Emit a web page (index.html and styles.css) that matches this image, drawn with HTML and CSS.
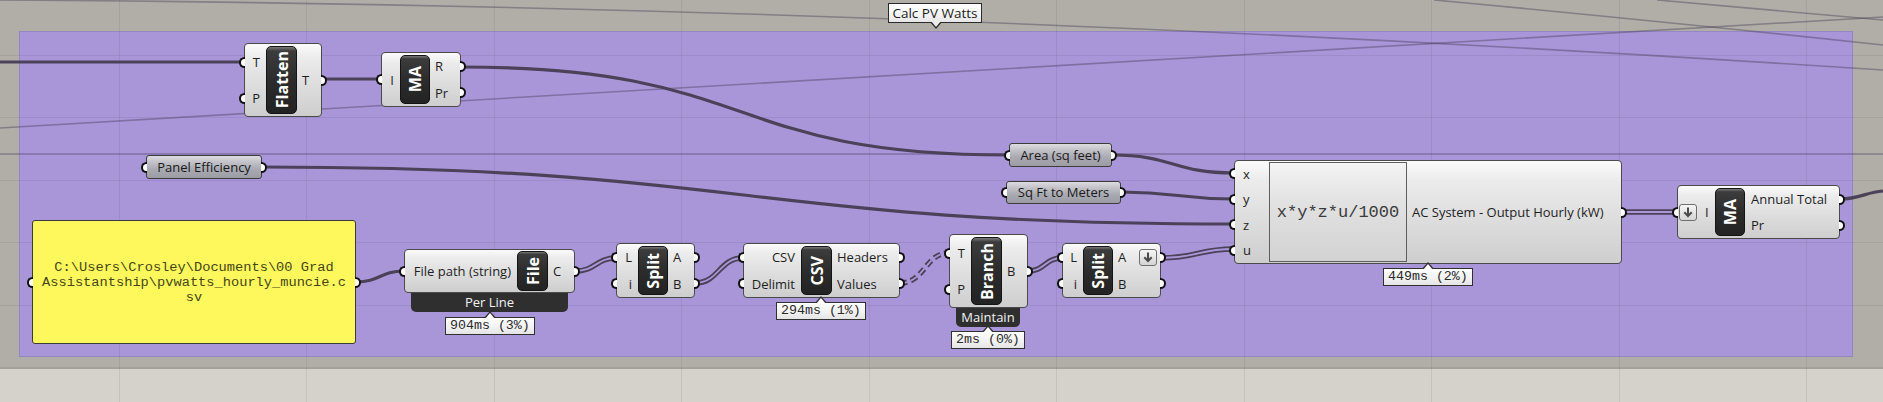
FILE: index.html
```html
<!DOCTYPE html>
<html>
<head>
<meta charset="utf-8">
<title>Calc PV Watts</title>
<link rel="stylesheet" href="styles.css">
</head>
<body>
<div class="canvas">
  <div class="group"></div>

  <svg class="wires" width="1883" height="402" viewBox="0 0 1883 402">
    <g class="grid">
      <path d="M119.5,0V402M306.5,0V402M494.5,0V402M681.5,0V402M869.5,0V402M1056.5,0V402M1244.5,0V402M1431.5,0V402M1619.5,0V402M1806.5,0V402"/>
      <path d="M0,55.5H1883M0,117.5H1883M0,180.5H1883M0,242.5H1883M0,305.5H1883"/>
    </g>
    <g class="thin">
      <path d="M0,128 L1883,17"/>
      <path d="M0,154 L1883,154"/>
      <path d="M0,0 Q900,5 1883,70"/>
      <path d="M1434,0 Q1650,20 1883,45"/>
      <path d="M1657,0 L1883,20"/>
    </g>
    <g class="wire">
      <path d="M0,62 L244,62"/>
      <path d="M322,79 L381,79"/>
      <path d="M461,67 C760,67 720,155 1009,155"/>
      <path d="M262,167 C748,167 748,224 1234,224"/>
      <path d="M1112,155 C1173,155 1173,173 1234,173"/>
      <path d="M1121,192 C1178,192 1178,199 1234,199"/>
      <path d="M356,282 C380,282 380,271 404,271"/>
      <path d="M1840,199 C1860,199 1866,192 1883,191"/>
    </g>
    <g class="tree-out">
      <path d="M575,271 C596,271 596,258 616,258"/>
      <path d="M695,283 C719,283 719,258 743,258"/>
      <path d="M1028,271 C1045,271 1045,258 1062,258"/>
      <path d="M1161,258 C1198,258 1198,249 1234,249"/>
      <path d="M1622,212 L1677,212"/>
      <path class="dash" d="M900,283 C925,283 925,253 949,253"/>
    </g>
    <g class="tree-in">
      <path d="M575,271 C596,271 596,258 616,258"/>
      <path d="M695,283 C719,283 719,258 743,258"/>
      <path d="M1028,271 C1045,271 1045,258 1062,258"/>
      <path d="M1161,258 C1198,258 1198,249 1234,249"/>
      <path d="M1622,212 L1677,212"/>
      <path class="dash" d="M900,283 C925,283 925,253 949,253"/>
    </g>
  </svg>

  <div class="tag">Calc PV Watts</div>

  <!-- Flatten -->
  <div class="comp flatten">
    <div class="col ins"><div class="pin">T</div><div class="pin">P</div></div>
    <div class="icon"><span>Flatten</span></div>
    <div class="col outs"><div class="pout">T</div></div>
  </div>

  <!-- Mass addition 1 -->
  <div class="comp ma1">
    <div class="col ins"><div class="pin">I</div></div>
    <div class="icon"><span>MA</span></div>
    <div class="col outs"><div class="pout">R</div><div class="pout">Pr</div></div>
  </div>

  <!-- Params -->
  <div class="param p-eff">Panel Efficiency</div>
  <div class="param p-area">Area (sq feet)</div>
  <div class="param p-sqft">Sq Ft to Meters</div>

  <!-- Expression -->
  <div class="comp expr">
    <div class="col ins"><div class="pin">x</div><div class="pin">y</div><div class="pin">z</div><div class="pin">u</div></div>
    <div class="exprbox">x*y*z*u/1000</div>
    <div class="col outs"><div class="pout">AC System - Output Hourly (kW)</div></div>
    <div class="timing t-expr">449ms (2%)</div>
  </div>

  <!-- Mass addition 2 -->
  <div class="comp ma2">
    <div class="col ins"><div class="pin prow"><span class="flag"><svg width="12" height="12" viewBox="0 0 12 12"><path d="M6 1.5V10M2.3 6.3L6 10l3.7-3.7"/></svg></span><span class="lbl">I</span></div></div>
    <div class="icon"><span>MA</span></div>
    <div class="col outs"><div class="pout">Annual Total</div><div class="pout">Pr</div></div>
  </div>

  <!-- Panel -->
  <div class="panel">C:\Users\Crosley\Documents\00 Grad<br>Assistantship\pvwatts_hourly_muncie.c<br>sv</div>

  <!-- Read file -->
  <div class="comp file">
    <div class="col ins"><div class="pin">File path (string)</div></div>
    <div class="icon"><span>File</span></div>
    <div class="col outs"><div class="pout">C</div></div>
    <div class="bar b-file">Per Line</div>
    <div class="timing t-file">904ms (3%)</div>
  </div>

  <!-- Split 1 -->
  <div class="comp split1">
    <div class="col ins"><div class="pin">L</div><div class="pin">i</div></div>
    <div class="icon"><span>Split</span></div>
    <div class="col outs"><div class="pout">A</div><div class="pout">B</div></div>
  </div>

  <!-- CSV -->
  <div class="comp csv">
    <div class="col ins"><div class="pin">CSV</div><div class="pin">Delimit</div></div>
    <div class="icon"><span>CSV</span></div>
    <div class="col outs"><div class="pout">Headers</div><div class="pout">Values</div></div>
    <div class="timing t-csv">294ms (1%)</div>
  </div>

  <!-- Branch -->
  <div class="comp branch">
    <div class="col ins"><div class="pin">T</div><div class="pin">P</div></div>
    <div class="icon"><span>Branch</span></div>
    <div class="col outs"><div class="pout">B</div></div>
    <div class="bar b-branch">Maintain</div>
    <div class="timing t-branch">2ms (0%)</div>
  </div>

  <!-- Split 2 -->
  <div class="comp split2">
    <div class="col ins"><div class="pin">L</div><div class="pin">i</div></div>
    <div class="icon"><span>Split</span></div>
    <div class="col outs"><div class="pout prow"><span class="lbl">A</span><span class="flag right"><svg width="12" height="12" viewBox="0 0 12 12"><path d="M6 1.5V10M2.3 6.3L6 10l3.7-3.7"/></svg></span></div><div class="pout">B</div></div>
  </div>
</div>
</body>
</html>
```

FILE: styles.css
```css
html, body {
  margin: 0;
  padding: 0;
}
body {
  width: 1883px;
  height: 402px;
  overflow: hidden;
  font-family: "Open Sans", "Noto Sans", sans-serif;
}
.canvas {
  position: relative;
  width: 1883px;
  height: 402px;
  overflow: hidden;
  background: linear-gradient(to bottom, #b1aea7 0, #b1aea7 367px, #a4a19a 367px, #a4a19a 369px, #d5d2cb 369px);
}
.group {
  position: absolute;
  left: 19px;
  top: 31px;
  width: 1834px;
  height: 326px;
  box-sizing: border-box;
  background: #a996d9;
  border: 1px solid #9786c4;
}
.wires {
  position: absolute;
  left: 0;
  top: 0;
}
.grid path {
  fill: none;
  stroke: rgba(40, 30, 60, 0.09);
  stroke-width: 1;
}
.thin path {
  fill: none;
  stroke: rgba(70, 60, 85, 0.42);
  stroke-width: 1.6;
}
.wire path {
  fill: none;
  stroke: #4b4259;
  stroke-width: 3.2;
}
.tree-out path {
  fill: none;
  stroke: #4b4259;
  stroke-width: 5.4;
}
.tree-in path {
  fill: none;
  stroke: #a996d9;
  stroke-width: 1.8;
}
.tree-out path.dash,
.tree-in path.dash {
  stroke-dasharray: 7 4;
}

/* group tag */
.tag {
  position: absolute;
  left: 888px;
  top: 3px;
  width: 94px;
  height: 20px;
  box-sizing: border-box;
  border: 1px solid #2a2a2a;
  background: linear-gradient(#ffffff, #f4f4f4 60%, #e6e6e6);
  font-size: 13.5px;
  line-height: 18px;
  text-align: center;
  white-space: nowrap;
  color: #1c1c1c;
}
.tag::before {
  content: "";
  position: absolute;
  left: 41px;
  bottom: -7px;
  border-left: 6px solid transparent;
  border-right: 6px solid transparent;
  border-top: 7px solid #2a2a2a;
}
.tag::after {
  content: "";
  position: absolute;
  left: 42px;
  bottom: -5px;
  border-left: 5px solid transparent;
  border-right: 5px solid transparent;
  border-top: 6px solid #ececec;
}

/* components */
.comp {
  position: absolute;
  display: flex;
  box-sizing: border-box;
  border: 1px solid #4a4a4a;
  border-radius: 4px;
  background: linear-gradient(#fbfbfb 0, #ececec 18%, #dedede 55%, #cecece 100%);
  font-size: 13px;
  color: #1e1e1e;
}
.col {
  flex: none;
  display: flex;
  flex-direction: column;
  justify-content: space-around;
}
.ins {
  text-align: right;
}
.outs {
  flex: 1;
  text-align: left;
}
.pin, .pout {
  position: relative;
  height: 16px;
  line-height: 16px;
  white-space: nowrap;
}
.pin {
  padding-right: 6px;
}
.pout {
  padding-left: 5px;
}
.pin::before {
  content: "";
  position: absolute;
  left: -6px;
  top: 50%;
  margin-top: -5.5px;
  width: 4px;
  height: 7px;
  border: 2px solid #111;
  border-right: 0;
  border-radius: 6px 0 0 6px;
  background: #fff;
}
.pout::after {
  content: "";
  position: absolute;
  right: -6px;
  top: 50%;
  margin-top: -5.5px;
  width: 4px;
  height: 7px;
  border: 2px solid #111;
  border-left: 0;
  border-radius: 0 6px 6px 0;
  background: #fff;
}
.icon {
  flex: none;
  margin: 2px 0;
  box-sizing: border-box;
  border: 1px solid #141414;
  border-radius: 5px;
  background: linear-gradient(#7a7a7a 0, #3c3c3c 6%, #2c2c2c 50%, #232323 100%);
  display: flex;
  align-items: center;
  justify-content: center;
}
.icon span {
  writing-mode: vertical-rl;
  transform: rotate(180deg);
  font-family: "Open Sans", "Noto Sans", sans-serif;
  font-weight: 700;
  font-size: 16px;
  line-height: 20px;
  color: #ffffff;
  white-space: nowrap;
}

/* individual components */
.flatten { left: 244px; top: 43px; width: 78px; height: 74px; }
.flatten .ins { width: 21px; }
.flatten .icon { width: 31px; }

.ma1 { left: 381px; top: 52px; width: 80px; height: 55px; }
.ma1 .ins { width: 18px; }
.ma1 .icon { width: 30px; }

.expr { left: 1234px; top: 160px; width: 388px; height: 104px; }
.expr .ins { width: 34px; text-align: left; }
.expr .pin { padding-left: 8px; padding-right: 0; }
.exprbox {
  flex: none;
  width: 138px;
  margin: 1px 0;
  box-sizing: border-box;
  border: 1px solid #5e5e5e;
  background: linear-gradient(#f4f4f4, #e2e2e2 40%, #d2d2d2);
  display: flex;
  align-items: center;
  justify-content: center;
  font-family: "Liberation Mono", "DejaVu Sans Mono", monospace;
  font-size: 17px;
  color: #3a3a3a;
}

.ma2 { left: 1677px; top: 185px; width: 163px; height: 54px; }
.ma2 .ins { width: 37px; text-align: left; }
.ma2 .pin { padding: 0; }
.ma2 .icon { width: 30px; }
.ma2 .outs .pout { padding-left: 6px; }

.prow {
  display: flex;
  align-items: center;
}
.flag {
  flex: none;
  width: 18px;
  height: 17px;
  margin-left: 1px;
  box-sizing: border-box;
  border: 1px solid #6f6f6f;
  border-radius: 3px;
  background: linear-gradient(#f6f6f6, #d4d4d4);
  display: flex;
  align-items: center;
  justify-content: center;
}
.flag path {
  fill: none;
  stroke: #4a4a4a;
  stroke-width: 2;
}
.flag.right {
  margin-left: auto;
  margin-right: 3px;
}
.ma2 .lbl {
  margin-left: 8px;
}

.file { left: 404px; top: 249px; width: 171px; height: 44px; }
.file .ins { width: 112px; }
.file .icon { width: 31px; margin: 1px 0; }

.split1 { left: 616px; top: 243px; width: 79px; height: 55px; }
.split1 .ins { width: 21px; }
.split1 .icon { width: 30px; }

.csv { left: 743px; top: 243px; width: 157px; height: 55px; }
.csv .ins { width: 57px; }
.csv .icon { width: 31px; }

.branch { left: 949px; top: 234px; width: 79px; height: 74px; }
.branch .ins { width: 21px; }
.branch .icon { width: 31px; }

.split2 { left: 1062px; top: 243px; width: 99px; height: 55px; }
.split2 .ins { width: 20px; }
.split2 .icon { width: 30px; }

/* bars under components */
.bar {
  position: absolute;
  height: 19px;
  background: #2f2f2f;
  border-radius: 0 0 5px 5px;
  color: #f2f2f2;
  font-size: 13px;
  line-height: 18px;
  text-align: center;
}
.b-file { left: 6px; top: 43px; width: 157px; }
.b-branch { left: 6px; top: 73px; width: 64px; }

/* timing tooltips */
.timing {
  position: absolute;
  height: 18px;
  box-sizing: border-box;
  padding: 0 4px;
  border: 1px solid #303030;
  background: linear-gradient(#ffffff, #f1f1f1 60%, #e4e4e4);
  font-family: "Liberation Mono", "DejaVu Sans Mono", monospace;
  font-size: 13.3px;
  line-height: 16px;
  color: #2a2a2a;
  white-space: nowrap;
}
.timing::before {
  content: "";
  position: absolute;
  left: 50%;
  top: -7px;
  margin-left: -6px;
  border-left: 6px solid transparent;
  border-right: 6px solid transparent;
  border-bottom: 7px solid #303030;
}
.timing::after {
  content: "";
  position: absolute;
  left: 50%;
  top: -5px;
  margin-left: -5px;
  border-left: 5px solid transparent;
  border-right: 5px solid transparent;
  border-bottom: 6px solid #ffffff;
}
.t-file { left: 40px; top: 67px; }
.t-csv { left: 32px; top: 58px; }
.t-branch { left: 1px; top: 96px; }
.t-expr { left: 148px; top: 107px; }

/* parameters */
.param {
  position: absolute;
  box-sizing: border-box;
  border: 1px solid #3c3c3c;
  border-radius: 3px;
  background: linear-gradient(#dcdce0 0, #c4c4ca 25%, #a9a9b1 60%, #9c9ca4 100%);
  font-size: 13px;
  color: #1a1a1a;
  text-align: center;
  white-space: nowrap;
}
.param::before,
.panel::before {
  content: "";
  position: absolute;
  left: -6px;
  top: 50%;
  margin-top: -5.5px;
  width: 4px;
  height: 7px;
  border: 2px solid #111;
  border-right: 0;
  border-radius: 6px 0 0 6px;
  background: #fff;
}
.param::after,
.panel::after {
  content: "";
  position: absolute;
  right: -6px;
  top: 50%;
  margin-top: -5.5px;
  width: 4px;
  height: 7px;
  border: 2px solid #111;
  border-left: 0;
  border-radius: 0 6px 6px 0;
  background: #fff;
}
.p-eff { left: 146px; top: 155px; width: 116px; height: 24px; line-height: 22px; }
.p-area { left: 1009px; top: 143px; width: 103px; height: 24px; line-height: 22px; }
.p-sqft { left: 1006px; top: 181px; width: 115px; height: 23px; line-height: 21px; }

/* yellow panel */
.panel {
  position: absolute;
  left: 32px;
  top: 220px;
  width: 324px;
  height: 124px;
  box-sizing: border-box;
  border: 1px solid #3a3a3a;
  border-radius: 3px;
  background: #fff85c;
  display: flex;
  align-items: center;
  justify-content: center;
  text-align: center;
  font-family: "Liberation Mono", "DejaVu Sans Mono", monospace;
  font-size: 13.7px;
  line-height: 15px;
  color: #45461a;
}
```
